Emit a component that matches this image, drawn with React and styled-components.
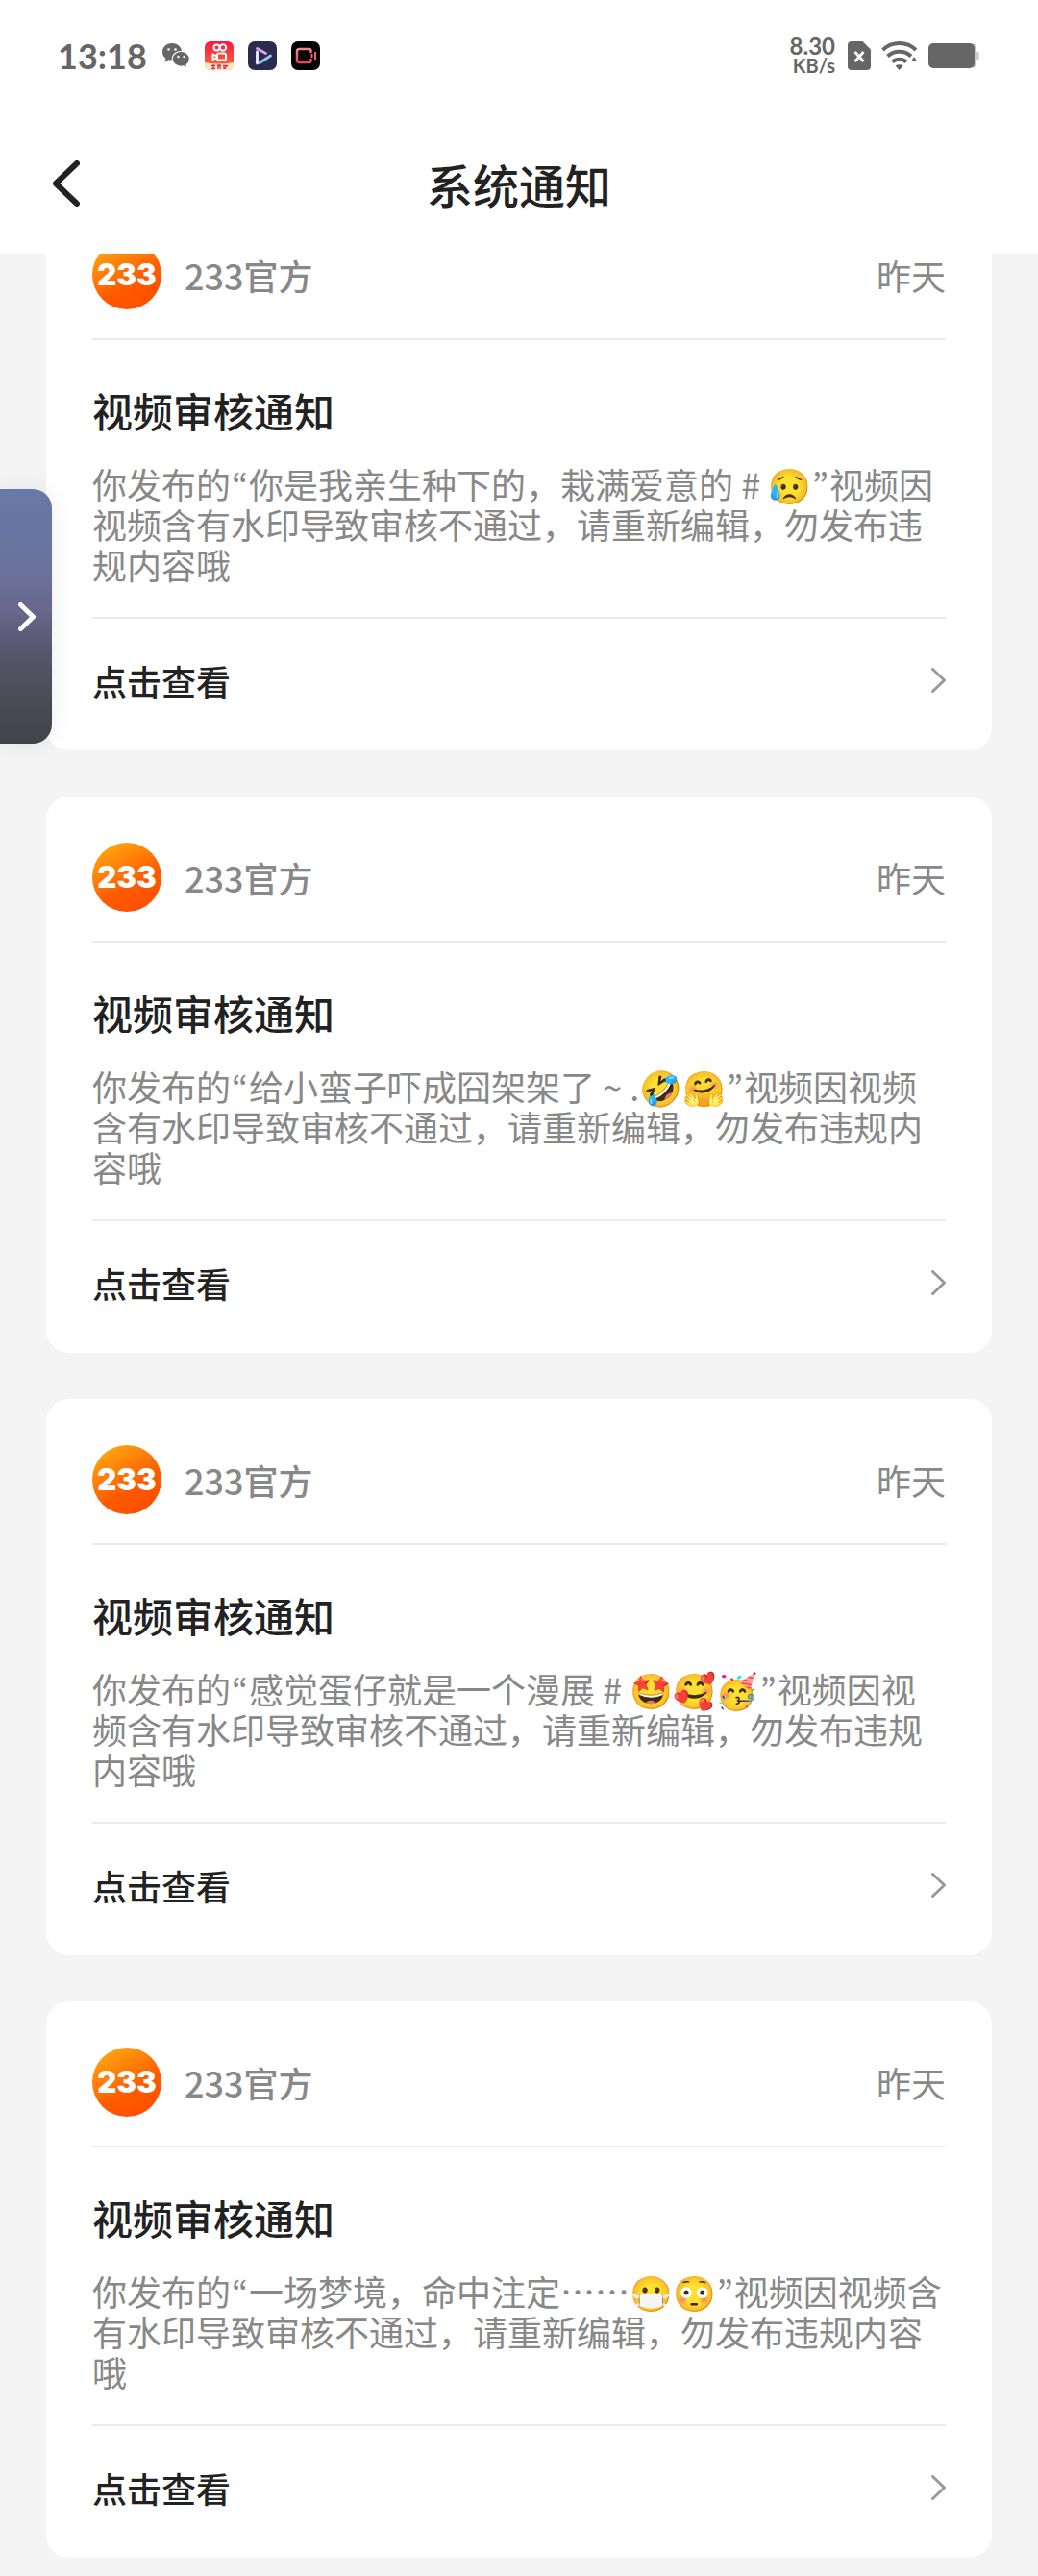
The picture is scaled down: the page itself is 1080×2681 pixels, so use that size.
import styled, { createGlobalStyle } from "styled-components";

const notices = [
  {
    id: 1,
    lead: "你是我亲生种下的，栽满爱意的 # ",
    emoji: "😥",
  },
  {
    id: 2,
    lead: "给小蛮子吓成囧架架了 ~ .",
    emoji: "🤣🤗",
  },
  {
    id: 3,
    lead: "感觉蛋仔就是一个漫展 # ",
    emoji: "🤩🥰🥳",
  },
  {
    id: 4,
    lead: "一场梦境，命中注定……",
    emoji: "😷😳",
  },
];

function WechatIcon() {
  return (
    <svg width="30" height="30" viewBox="0 0 30 30" aria-hidden="true">
      <path
        fill="#666"
        d="M11 2C5 2 1 6 1 11c0 2.900 1.300 5.200 3.500 6.800l-1 4 4-2.500c1.100.3 2.300.5 3.500.5 6 0 10-4 10-8.800S17 2 11 2z"
      />
      <path
        fill="#666"
        stroke="#fff"
        strokeWidth="1.200"
        d="M20.500 10.500c-5.200 0-9.300 3.400-9.300 7.900s4.100 7.900 9.300 7.900c1 0 2-.2 2.900-.5l3.600 2.200-.9-3.400c2-1.400 3.200-3.700 3.200-6.200 0-4.500-3.600-7.900-8.800-7.900z"
      />
      <circle cx="7.500" cy="8.500" r="1.300" fill="#fff" />
      <circle cx="14.500" cy="8.500" r="1.300" fill="#fff" />
      <circle cx="17.500" cy="16" r="1.200" fill="#fff" />
      <circle cx="23.500" cy="16" r="1.200" fill="#fff" />
    </svg>
  );
}

function CameraAppIcon() {
  return (
    <svg width="30" height="30" viewBox="0 0 30 30" aria-hidden="true">
      <defs>
        <linearGradient id="cameraBg" x1="0" y1="0" x2="0" y2="1">
          <stop offset="0" stopColor="#f8183f" />
          <stop offset="0.750" stopColor="#fb5a3c" />
        </linearGradient>
        <clipPath id="cameraClip">
          <rect width="30" height="30" rx="6" />
        </clipPath>
      </defs>
      <g clipPath="url(#cameraClip)">
        <rect width="30" height="30" fill="url(#cameraBg)" />
        <path fill="#ffe6c4" d="M0 22q15 3 30 0v8H0z" />
        <g fill="none" stroke="#fff" strokeWidth="2">
          <circle cx="12.500" cy="6.500" r="3" />
          <circle cx="19" cy="6.500" r="3.200" />
          <rect x="13" y="12.500" width="9" height="7" rx="1.500" />
          <path d="M13 15.500l-4.500-2v5.500l4.500-2z" />
        </g>
        <path
          stroke="#e0304a"
          strokeWidth="1.300"
          fill="none"
          d="M7 25.500h4M9 24v5M7 28.500h4M13 25.500h4M14 24v5M16 24v5M19 25.500h5M20 25v4M23 25l-2 4"
        />
      </g>
    </svg>
  );
}

function PlayAppIcon() {
  return (
    <svg width="30" height="30" viewBox="0 0 30 30" aria-hidden="true">
      <rect width="30" height="30" rx="7" fill="#2b2b4f" />
      <g fill="none" strokeWidth="2.800" strokeLinecap="round">
        <path stroke="#f4f4ff" d="M9.500 11v12" />
        <path stroke="#dba4ea" d="M9.500 7.500l9 5" />
        <path stroke="#93c4f7" d="M12 22.500L23.500 15" />
      </g>
    </svg>
  );
}

function RecorderAppIcon() {
  return (
    <svg width="30" height="30" viewBox="0 0 30 30" aria-hidden="true">
      <defs>
        <linearGradient id="recorderLine" x1="0" y1="0" x2="0" y2="1">
          <stop offset="0" stopColor="#f08a8a" />
          <stop offset="1" stopColor="#f0405e" />
        </linearGradient>
      </defs>
      <rect width="30" height="30" rx="7" fill="#050505" />
      <g fill="none" stroke="url(#recorderLine)" strokeWidth="2.400">
        <path d="M20.500 12v-2A2 2 0 0 0 18.500 8H8.500A2.500 2.500 0 0 0 6 10.500v9A2.500 2.500 0 0 0 8.500 22h10a2 2 0 0 0 2-2v-2" />
      </g>
      <path stroke="#f0606e" strokeWidth="2" d="M21.500 13v4M25 11v8" />
    </svg>
  );
}

function SimIcon() {
  return (
    <svg width="24" height="30" viewBox="0 0 24 30" aria-hidden="true">
      <path
        fill="#666"
        d="M4 0h11.500L24 8.500V26a4 4 0 0 1-4 4H4a4 4 0 0 1-4-4V4a4 4 0 0 1 4-4z"
      />
      <path
        stroke="#fff"
        strokeWidth="2.800"
        d="M7.500 11l9 10M16.500 11l-9 10"
      />
    </svg>
  );
}

function WifiIcon() {
  return (
    <svg width="38" height="30" viewBox="0 0 38 30" aria-hidden="true">
      <g fill="none" stroke="#666" strokeWidth="4">
        <path d="M1.500 9a25 25 0 0 1 34.500 0" />
        <path d="M6.500 15.500a18 18 0 0 1 24.500 0" />
        <path d="M11.500 21.500a11 11 0 0 1 14.500 0" />
      </g>
      <path
        fill="#666"
        d="M18.700 30l-4.200-4.500q4.200-2.600 8.400 0zM34 16l3.500 5h-6.500z"
      />
    </svg>
  );
}

function BatteryIcon() {
  return (
    <svg width="54" height="28" viewBox="0 0 54 28" aria-hidden="true">
      <path
        fill="#ccc"
        d="M46 1a5 5 0 0 1 4 5v3.500q3 0 3 2.500v4q0 2.500-3 2.500V22a5 5 0 0 1-4 5z"
      />
      <rect y="1" width="48" height="26" rx="5" fill="#666" />
    </svg>
  );
}

function Chevron({ width, height, thickness, back }) {
  const pad = thickness / 2;
  const points = back
    ? `${width - pad},${pad} ${pad},${height / 2} ${width - pad},${height - pad}`
    : `${pad},${pad} ${width - pad},${height / 2} ${pad},${height - pad}`;
  return (
    <svg width={width} height={height} aria-hidden="true">
      <polyline
        points={points}
        fill="none"
        stroke="currentColor"
        strokeWidth={thickness}
        strokeLinecap="round"
        strokeLinejoin="round"
      />
    </svg>
  );
}

function NoticeCard({ lead, emoji }) {
  return (
    <Card>
      <CardHeader>
        <Avatar>233</Avatar>
        <Sender>233官方</Sender>
        <Time>昨天</Time>
      </CardHeader>
      <CardBody>
        <CardTitle>视频审核通知</CardTitle>
        <CardText>
          你发布的<Quote>“</Quote>
          {lead}
          {emoji}
          <Quote>”</Quote>视频因视频含有水印导致审核不通过，请重新编辑，勿发布违规内容哦
        </CardText>
      </CardBody>
      <CardLink href="#">
        点击查看
        <LinkArrow>
          <Chevron width={15} height={26} thickness={3} />
        </LinkArrow>
      </CardLink>
    </Card>
  );
}

function App() {
  return (
    <Page>
      <GlobalStyle />
      <TopArea>
        <StatusBar>
          <Clock>13:18</Clock>
          <AppIcons>
            <WechatIcon />
            <CameraAppIcon />
            <PlayAppIcon />
            <RecorderAppIcon />
          </AppIcons>
          <StatusIcons>
            <NetSpeed>
              <SpeedValue>8.30</SpeedValue>
              <SpeedUnit>KB/s</SpeedUnit>
            </NetSpeed>
            <SimIcon />
            <WifiIcon />
            <BatteryIcon />
          </StatusIcons>
        </StatusBar>
        <NavBar>
          <BackButton aria-label="返回">
            <Chevron width={28} height={48} thickness={6} back />
          </BackButton>
          <NavTitle>系统通知</NavTitle>
        </NavBar>
      </TopArea>
      <NoticeList>
        {notices.map((notice) => (
          <NoticeCard key={notice.id} lead={notice.lead} emoji={notice.emoji} />
        ))}
      </NoticeList>
      <SideTab aria-label="展开">
        <Chevron width={18} height={30} thickness={5} />
      </SideTab>
    </Page>
  );
}

export default App;

const GlobalStyle = createGlobalStyle`
  * {
    box-sizing: border-box;
  }

  body {
    margin: 0;
    background: #f4f4f4;
    font-family: "Noto Sans CJK SC", "Noto Color Emoji", sans-serif;
    color: #222;
  }

  svg {
    display: block;
    flex: none;
  }

  button {
    border: none;
    padding: 0;
    font: inherit;
    cursor: pointer;
  }
`;

const Page = styled.div`
  position: relative;
  min-height: 100vh;
`;

const TopArea = styled.header`
  position: sticky;
  top: 0;
  z-index: 1;
  background: #fff;
`;

const StatusBar = styled.div`
  display: flex;
  align-items: center;
  height: 116px;
  padding: 0 60px;
  color: #666;
  font-family: Lato, sans-serif;
  font-weight: bold;
`;

const Clock = styled.span`
  font-size: 36px;
  line-height: 42px;
`;

const AppIcons = styled.div`
  display: flex;
  gap: 15px;
  margin-left: 15px;
`;

const StatusIcons = styled.div`
  display: flex;
  align-items: center;
  gap: 11px;
  margin-left: auto;
`;

const NetSpeed = styled.div`
  display: flex;
  flex-direction: column;
  align-items: flex-end;
  padding-right: 2px;
`;

const SpeedValue = styled.span`
  font-size: 24px;
  line-height: 20px;
`;

const SpeedUnit = styled.span`
  font-size: 20px;
  line-height: 20px;
`;

const NavBar = styled.div`
  display: grid;
  grid-template-columns: 56px 1fr 56px;
  align-items: center;
  height: 148px;
  padding: 2px 55px 0;
`;

const BackButton = styled.button`
  background: none;
  color: #222;
`;

const NavTitle = styled.h1`
  margin: 0;
  font-size: 48px;
  line-height: 56px;
  font-weight: 500;
  text-align: center;
`;

/* pulled up so the first card is partly scrolled under the nav bar */
const NoticeList = styled.main`
  display: flex;
  flex-direction: column;
  gap: 48px;
  margin-top: -62px;
  padding: 0 48px 18px;
`;

const Card = styled.article`
  padding: 0 48px;
  border-radius: 24px;
  background: #fff;
`;

const CardHeader = styled.div`
  display: flex;
  align-items: center;
  padding: 48px 0 30px;
  border-bottom: 2px solid #eaeaea;
  color: #888;
  font-size: 36px;
  line-height: 42px;
`;

const Avatar = styled.div`
  display: flex;
  align-items: center;
  justify-content: center;
  width: 72px;
  height: 72px;
  border-radius: 50%;
  background: linear-gradient(150deg, #ffae12 5%, #ff5a00 60%, #ff4a00);
  color: #fff;
  font-family: Inter, sans-serif;
  font-size: 31px;
  font-weight: 900;
`;

const Sender = styled.span`
  margin-left: 24px;
  font-weight: 500;
`;

const Time = styled.span`
  margin-left: auto;
`;

const CardBody = styled.div`
  padding: 45px 0 34px;
  border-bottom: 2px solid #eaeaea;
`;

const CardTitle = styled.h2`
  margin: 0 0 27px;
  font-size: 42px;
  line-height: 56px;
  font-weight: 500;
`;

const CardText = styled.p`
  margin: 0;
  color: #888;
  font-size: 36px;
  line-height: 42px;
`;

/* the Korean face has narrow curly quotes, the Chinese one full-width */
const Quote = styled.span`
  padding: 0 1px;
  font-family: "Noto Sans CJK KR", sans-serif;
`;

const CardLink = styled.a`
  display: flex;
  align-items: center;
  justify-content: space-between;
  height: 137px;
  padding-bottom: 9px;
  color: #222;
  font-size: 36px;
  line-height: 42px;
  font-weight: 500;
  text-decoration: none;
`;

const LinkArrow = styled.span`
  color: #999;
`;

const SideTab = styled.button`
  position: absolute;
  top: 509px;
  left: 0;
  display: flex;
  align-items: center;
  justify-content: flex-end;
  width: 54px;
  height: 265px;
  && {
    padding-right: 17px;
  }
  border-radius: 0 20px 20px 0;
  background: linear-gradient(
    #6878a8,
    #6a7199 35%,
    #68668c 48%,
    #55566a 65%,
    #45484d 90%,
    #404347
  );
  box-shadow: 0 0 24px rgba(0, 0, 0, 0.08);
  color: #fff;
`;
